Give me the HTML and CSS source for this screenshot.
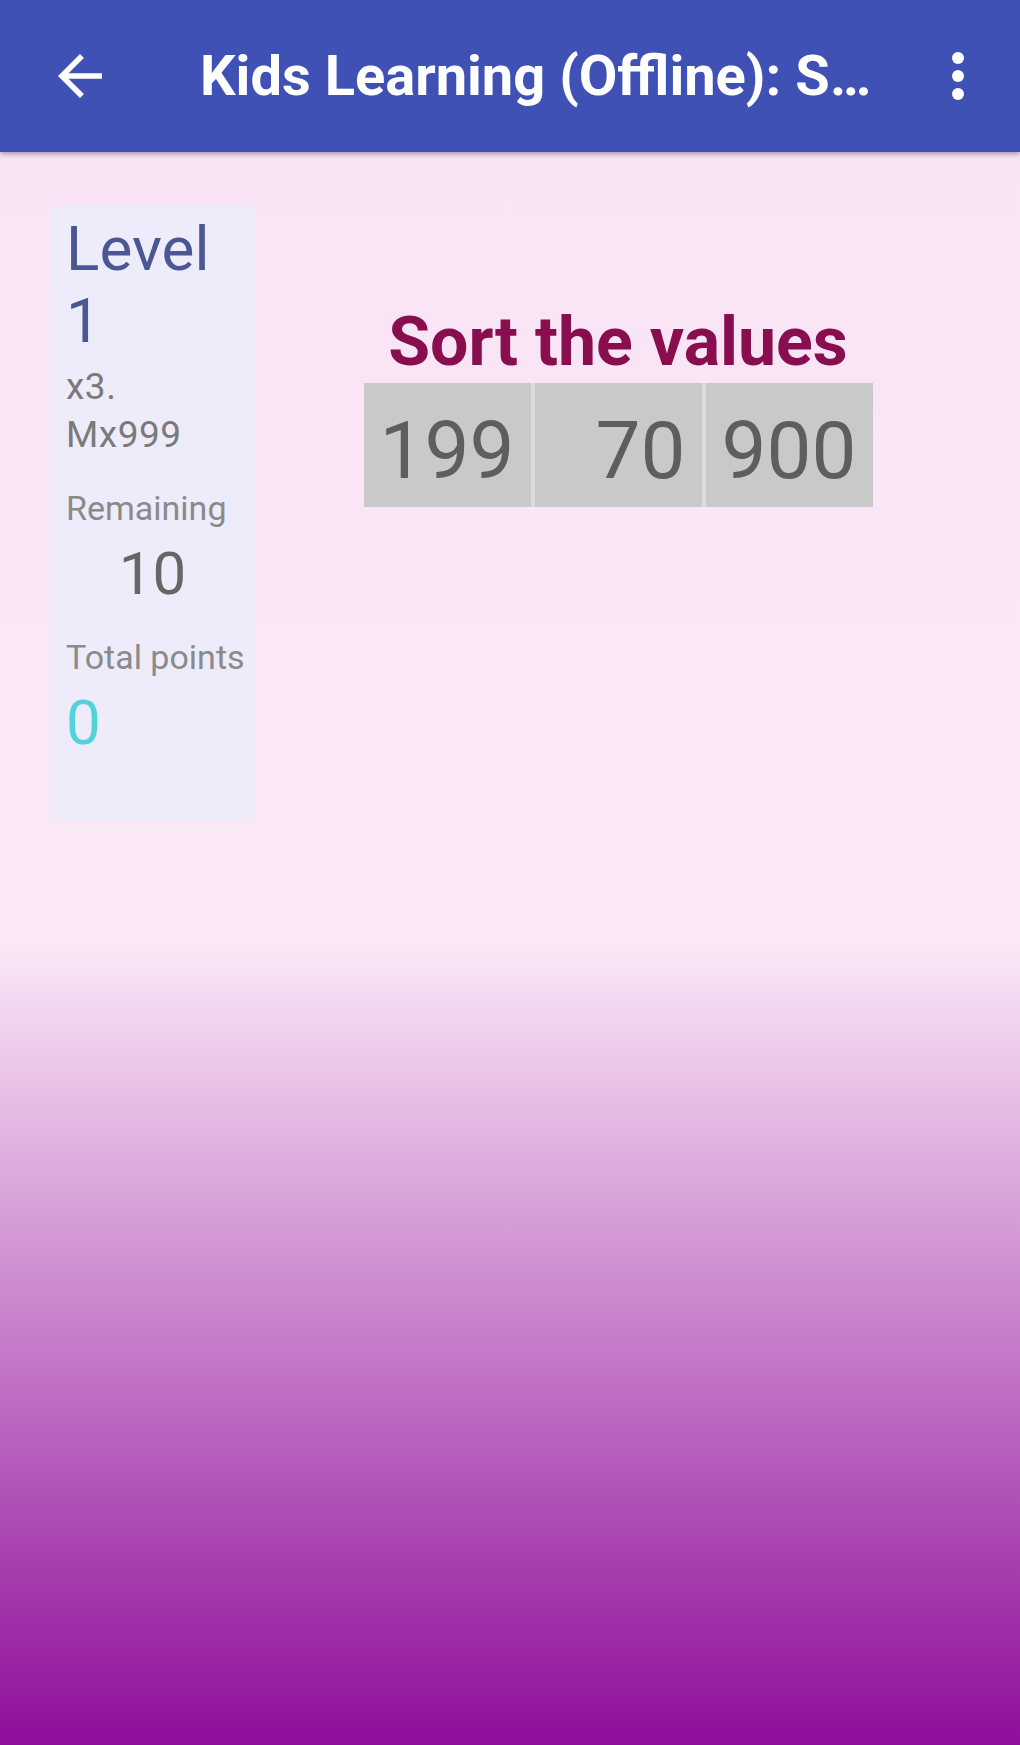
FILE: index.html
```html
<!DOCTYPE html>
<html lang="en">
<head>
<meta charset="utf-8">
<title>Kids Learning (Offline): Sort the values</title>
<link rel="stylesheet" href="styles.css">
</head>
<body>
<header class="appbar">
  <svg class="appbar-back" viewBox="0 0 24 24" aria-hidden="true"><path d="M20 11H7.83l5.59-5.59L12 4l-8 8 8 8 1.41-1.41L7.83 13H20v-2z"/></svg>
  <div class="appbar-title">Kids Learning (Offline): S…</div>
  <svg class="appbar-more" viewBox="0 0 24 24" aria-hidden="true"><circle cx="12" cy="6" r="2"/><circle cx="12" cy="12" r="2"/><circle cx="12" cy="18" r="2"/></svg>
</header>
<main class="content">
  <aside class="stats">
    <div class="stats-level">Level<br>1</div>
    <div class="stats-mode">x3.<br>Mx999</div>
    <div class="stats-label stats-label-remaining">Remaining</div>
    <div class="stats-remaining">10</div>
    <div class="stats-label stats-label-points">Total points</div>
    <div class="stats-points">0</div>
  </aside>
  <section class="game">
    <h1 class="game-title">Sort the values</h1>
    <div class="values">
      <div class="value-cell">199</div>
      <div class="value-cell">70</div>
      <div class="value-cell">900</div>
    </div>
  </section>
</main>
</body>
</html>
```
FILE: styles.css
```css
html, body {
  margin: 0;
  padding: 0;
}
body {
  width: 1020px;
  min-height: 1745px;
  font-family: Roboto, "Liberation Sans", Arial, sans-serif;
  background: linear-gradient(to bottom, #f9e3f6 0px, #fbe8f7 945px, #8e0e9a 1745px);
}
.appbar {
  height: 152px;
  box-sizing: border-box;
  background: #3f51b5;
  display: flex;
  align-items: center;
  box-shadow: 0 2px 5px rgba(0, 0, 0, 0.35);
  color: #fff;
}
.appbar-back {
  width: 66px;
  height: 66px;
  margin-left: 47px;
  fill: #fff;
  flex: none;
}
.appbar-title {
  flex: 1;
  margin-left: 87px;
  font-size: 56px;
  font-weight: 700;
  letter-spacing: 0;
  white-space: nowrap;
  line-height: 66px;
}
.appbar-more {
  width: 72px;
  height: 72px;
  margin-right: 26px;
  fill: #fff;
  flex: none;
}
.content {
  display: flex;
  align-items: flex-start;
  padding-top: 53px;
}
.stats {
  margin-left: 50px;
  width: 205px;
  box-sizing: border-box;
  padding: 8px 0 62px 16px;
  background: #eeecfa;
  border-radius: 6px;
  color: #888;
}
.stats-level {
  font-size: 62px;
  line-height: 72px;
  color: #4b5792;
}
.stats-mode {
  margin-top: 6px;
  font-size: 37px;
  line-height: 48px;
  color: #7a7a7a;
  letter-spacing: 0.5px;
}
.stats-label {
  font-size: 34px;
  line-height: 38px;
  color: #8a8a8a;
}
.stats-label-remaining {
  margin-top: 30px;
}
.stats-remaining {
  margin-top: 12px;
  padding-right: 16px;
  text-align: center;
  font-size: 60px;
  line-height: 70px;
  color: #666;
}
.stats-label-points {
  margin-top: 28px;
  font-size: 34px;
  line-height: 40px;
}
.stats-points {
  margin-top: 10px;
  font-size: 62px;
  line-height: 72px;
  color: #52d3dc;
}
.game {
  flex: 1;
  display: flex;
  flex-direction: column;
  align-items: center;
  padding-right: 39px;
  padding-top: 98px;
}
.game-title {
  margin: 0;
  font-size: 68px;
  line-height: 78px;
  font-weight: 700;
  color: #880e4f;
}
.values {
  margin-top: 2px;
  display: flex;
  gap: 4px;
  width: 509px;
  background: #dcdcdc;
}
.value-cell {
  flex: 1;
  height: 124px;
  box-sizing: border-box;
  padding: 18px 16px 0 0;
  text-align: right;
  font-size: 80px;
  line-height: 100px;
  color: #5e5e5e;
  background: #c9c9c9;
}
```
